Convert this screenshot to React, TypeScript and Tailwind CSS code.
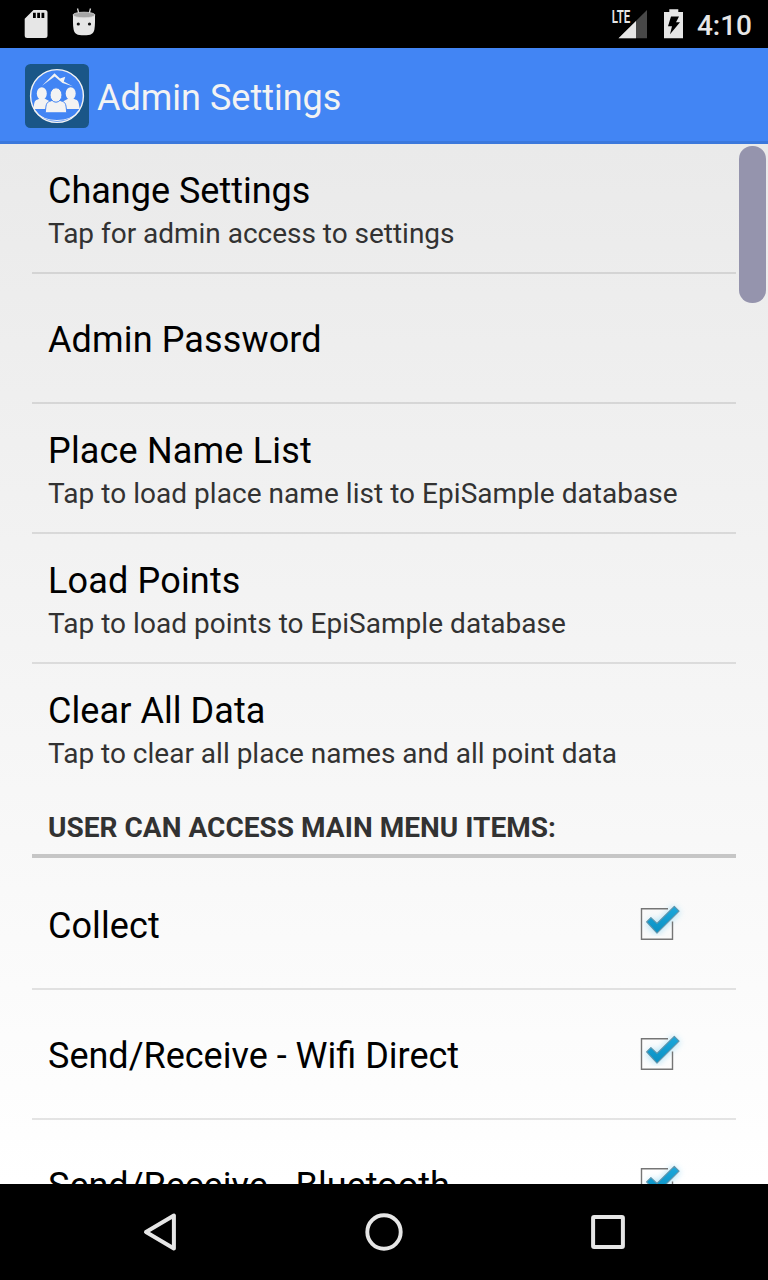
import React from "react";

function SdCardIcon() {
  return (
    <svg width="24" height="30" viewBox="0 0 24 30" className="block">
      <path
        fillRule="evenodd"
        fill="#e6e6e6"
        d="M9.500 2H21a2.500 2.500 0 0 1 2.500 2.500V27.500A2.500 2.500 0 0 1 21 30H3.200A2.500 2.500 0 0 1 .700 27.500V10.800ZM9 4.700v5.300h2.800V4.700ZM13.200 4.700v5.300H16V4.700ZM17.500 4.700v5.300h2.800V4.700Z"
      />
    </svg>
  );
}

function DroidIcon() {
  return (
    <svg width="24" height="30" viewBox="0 0 24 30" className="block">
      <path d="M5.500 .500 7 6M18.500 .500 17 6" stroke="#d8d8d8" strokeWidth="1.300" fill="none" />
      <path d="M1 7C1 12 .800 17 1.600 21.500C2.500 26 5 27.300 12 27.300S21.500 26 22.400 21.500C23.200 17 23 12 23 7Z" fill="#e6e6e6" />
      <ellipse cx="12" cy="7" rx="11" ry="2.800" fill="#a6a6a6" stroke="#dcdcdc" strokeWidth=".8" />
      <circle cx="6.300" cy="16" r="1.600" fill="#111" />
      <circle cx="17.500" cy="16" r="1.600" fill="#111" />
    </svg>
  );
}

function SignalIcon() {
  return (
    <svg width="38" height="32" viewBox="0 0 38 32" className="block">
      <path d="M37 2V30.300H8.500Z" fill="#484848" />
      <path d="M26 13V30.300H8.500Z" fill="#e6e6e6" />
      <text x="1.800" y="14.700" fontFamily="Roboto" fontWeight="600" fontSize="17.500" textLength="18.500" lengthAdjust="spacingAndGlyphs" fill="#e6e6e6">
        LTE
      </text>
    </svg>
  );
}

function BatteryIcon() {
  return (
    <svg width="20" height="30" viewBox="0 0 20 30" className="block">
      <path d="M5.300 .300H14.300V3.100H19V29.300H0V3.100H5.300Z" fill="#e6e6e6" />
      <path d="M7 7.600H15L12 13.300H16L6 25.300L8 17.300H4Z" fill="#000" />
    </svg>
  );
}

function AppLogo() {
  return (
    <svg width="64" height="64" viewBox="0 0 64 64" className="block">
      <rect width="64" height="64" rx="5.500" fill="#1a5687" />
      <circle cx="32" cy="32" r="26.400" fill="#4285f4" stroke="#f3f3f3" strokeWidth="1.400" />
      <path d="M17 21.800 29.500 9.200 35 14.400 40.300 12.800 38.800 17.600 47.600 22.300 37.500 18.900 29.700 12.600Z" fill="#f3f3f3" />
      <path d="M9.500 46.500Q17 56.500 32 56.500T54.500 46.500" fill="none" stroke="#f3f3f3" strokeWidth="1.200" />
      <path d="M8.300 45C9.300 38.500 9.500 36.500 12 35.700L15 34.500H19.500L26 38V45Z" fill="#f3f3f3" />
      <path d="M54.700 45C53.700 38.500 53.500 36.500 51 35.700L48 34.500H43.500L37 38V45Z" fill="#f3f3f3" />
      <ellipse cx="16.800" cy="29.500" rx="5" ry="6.300" fill="#f3f3f3" />
      <ellipse cx="45.700" cy="29.500" rx="5" ry="6.300" fill="#f3f3f3" />
      <path
        d="M20.300 48.800C21 41 21 38.700 24.500 37.400L28 36H34L37.500 37.400C41 38.700 41 41 41.700 48.800Z"
        fill="#f3f3f3"
        stroke="#4285f4"
        strokeWidth="1"
      />
      <ellipse cx="31" cy="31" rx="6" ry="7.200" fill="#f3f3f3" stroke="#4285f4" strokeWidth="1" />
    </svg>
  );
}

function Checkbox() {
  return (
    <svg width="64" height="64" viewBox="0 0 64 64" className="block">
      <defs>
        <linearGradient id="tick" x1="0" y1="0" x2="0" y2="1">
          <stop offset="0" stopColor="#1ca8dc" />
          <stop offset="1" stopColor="#0a90c2" />
        </linearGradient>
        <filter id="glow" x="-40%" y="-40%" width="180%" height="180%">
          <feGaussianBlur stdDeviation="3" />
        </filter>
      </defs>
      <path d="M22.500 31 31 38 51 19" stroke="#a4def5" strokeWidth="10" fill="none" opacity=".8" filter="url(#glow)" />
      <path d="M42 18.700H15.500V49.300H46.500V31.500" stroke="#757575" strokeWidth="1.400" fill="none" />
      <path d="M20.600 31.900 24.900 27.600 31 33.300 48.300 16.300 53.100 21.200 31 43.100Z" fill="url(#tick)" stroke="#6294aa" strokeWidth="1.100" strokeLinejoin="round" />
    </svg>
  );
}

type Preference = {
  title: string;
  summary?: string;
  checked?: boolean;
  titleClass?: string;
  summaryClass?: string;
};

const general: Preference[] = [
  { title: "Change Settings", summary: "Tap for admin access to settings", summaryClass: "tracking-[-0.02px]" },
  { title: "Admin Password", titleClass: "tracking-[0.13px]" },
  {
    title: "Place Name List",
    summary: "Tap to load place name list to EpiSample database",
    titleClass: "tracking-[0.18px]",
    summaryClass: "tracking-[0.04px]",
  },
  {
    title: "Load Points",
    summary: "Tap to load points to EpiSample database",
    titleClass: "tracking-[0.17px]",
    summaryClass: "tracking-[0.03px]",
  },
  { title: "Clear All Data", summary: "Tap to clear all place names and all point data", titleClass: "tracking-[0.07px]" },
];

const menuItems: Preference[] = [
  { title: "Collect", checked: true, titleClass: "tracking-[0.08px]" },
  { title: "Send/Receive - Wifi Direct", checked: true },
  { title: "Send/Receive - Bluetooth", checked: true },
];

function PreferenceRow({ item, divider }: { item: Preference; divider: boolean }) {
  return (
    <li className={divider ? "flex h-[130px] shrink-0 items-center border-b-2 border-black/10 px-4" : "flex h-32 shrink-0 items-center px-4"}>
      <div className={item.summary ? "min-w-0 flex-1 pt-1 whitespace-nowrap" : "min-w-0 flex-1 pt-[3px] whitespace-nowrap"}>
        <div className={`text-[36px] leading-[42px] text-black ${item.titleClass ?? ""}`}>{item.title}</div>
        {item.summary && (
          <div className={`pt-[5px] text-[28px] leading-[34px] text-[#323232] ${item.summaryClass ?? ""}`}>{item.summary}</div>
        )}
      </div>
      {item.checked && (
        <div className="mr-[30px] pb-1">
          <Checkbox />
        </div>
      )}
    </li>
  );
}

export default function App() {
  return (
    <div className="flex h-[1280px] w-[768px] flex-col overflow-hidden bg-black font-[Roboto,sans-serif]">
      <div className="flex h-12 shrink-0 items-center bg-black pr-4 pl-6">
        <div className="pb-0.5">
          <SdCardIcon />
        </div>
        <div className="ml-6 pb-0.5">
          <DroidIcon />
        </div>
        <div className="ml-auto flex items-center">
          <SignalIcon />
          <div className="mr-px ml-4">
            <BatteryIcon />
          </div>
          <span className="ml-3 pt-[3px] text-[28px] leading-8 font-medium text-[#e6e6e6]">4:10</span>
        </div>
      </div>
      <header className="flex h-24 shrink-0 items-center border-b-3 border-[#3b78dc] bg-[#4285f4] pt-[3px] pl-[25px]">
        <AppLogo />
        <h1 className="ml-2 pt-1 text-[36px] leading-[42px] text-[#f3f3f3]">Admin Settings</h1>
      </header>
      <main className="relative h-[1040px] shrink-0 overflow-hidden bg-linear-to-b from-[#eaeaea] to-white px-8">
        <ul className="flex flex-col">
          {general.map((item, i) => (
            <PreferenceRow key={item.title} item={item} divider={i < general.length - 1} />
          ))}
        </ul>
        <h2 className="mb-0.5 h-[66px] border-b-4 border-[#c6c6c6] px-4 pt-[19px] text-[28px] leading-[34px] font-bold tracking-[0.03px] whitespace-nowrap text-[#323232]">
          USER CAN ACCESS MAIN MENU ITEMS:
        </h2>
        <ul className="flex flex-col">
          {menuItems.map((item) => (
            <PreferenceRow key={item.title} item={item} divider />
          ))}
        </ul>
        <div className="absolute top-0.5 right-0.5 h-[157px] w-[27px] rounded-[13px] bg-[#9594ad]" />
      </main>
      <nav className="flex h-24 shrink-0 items-center justify-between bg-black px-[136px]">
        <svg width="48" height="48" viewBox="0 0 48 48">
          <path d="M10 24 37.900 7.500V40.500Z" fill="none" stroke="#e6e6e6" strokeWidth="4" strokeLinejoin="round" />
        </svg>
        <svg width="48" height="48" viewBox="0 0 48 48">
          <circle cx="24" cy="24" r="16.700" fill="none" stroke="#e6e6e6" strokeWidth="3.900" />
        </svg>
        <svg width="48" height="48" viewBox="0 0 48 48">
          <rect x="9.100" y="9.100" width="29.800" height="29.800" rx="1" fill="none" stroke="#e6e6e6" strokeWidth="4" />
        </svg>
      </nav>
    </div>
  );
}
